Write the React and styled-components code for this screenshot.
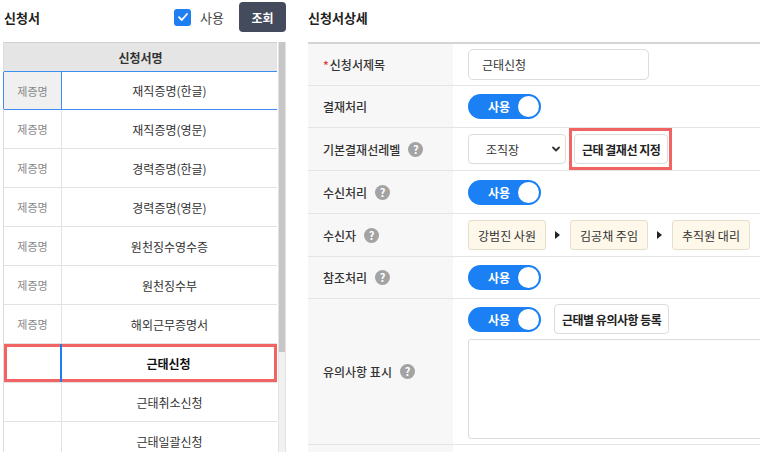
import styled, { createGlobalStyle } from 'styled-components';

const GlobalStyle = createGlobalStyle`
  html, body {
    margin: 0;
    padding: 0;
    background: #ffffff;
  }
  body {
    font-family: 'Noto Sans CJK KR', 'Noto Sans', sans-serif;
    color: #333333;
  }
`;

const Page = styled.div`
  display: flex;
  width: 760px;
  height: 452px;
  overflow: hidden;
`;

const LeftPanel = styled.section`
  width: 283px;
  margin-left: 3px;
  display: flex;
  flex-direction: column;
  flex-shrink: 0;
  overflow: hidden;
`;

const RightPanel = styled.section`
  flex: 1;
  min-width: 0;
  margin-left: 22px;
  display: flex;
  flex-direction: column;
  overflow: hidden;
`;

const PanelHeader = styled.div`
  height: 34px;
  flex-shrink: 0;
  margin-bottom: 8px;
  display: flex;
  align-items: center;
  padding-left: ${(p) => p.$indent || 0}px;
`;

const Title = styled.h2`
  margin: 0;
  font-size: 13px;
  font-weight: 700;
  color: #222222;
  flex: 1;
`;

const CheckLabel = styled.label`
  display: flex;
  align-items: center;
  gap: 9px;
  font-size: 13px;
  color: #444444;
  margin-right: 15px;
`;

const CheckBox = styled.span`
  width: 17px;
  height: 17px;
  border-radius: 3px;
  background: #1f7ff2;
  display: inline-flex;
  align-items: center;
  justify-content: center;
`;

const SearchButton = styled.button`
  width: 47px;
  height: 30px;
  border: none;
  border-radius: 4px;
  background: #434b5c;
  color: #ffffff;
  font-family: inherit;
  font-size: 12px;
  font-weight: 700;
  padding: 0;
`;

const ListBody = styled.div`
  display: grid;
  grid-template-columns: 1fr 8px;
  gap: 1px;
  flex: 1;
  min-height: 0;
  overflow: hidden;
`;

const ListTable = styled.div`
  border-left: 1px solid #dddddd;
  border-top: 1px solid #d0d0d0;
  display: flex;
  flex-direction: column;
`;

const ListHead = styled.div`
  height: 28px;
  flex-shrink: 0;
  background: #e5e5e5;
  display: flex;
  align-items: center;
  justify-content: center;
  font-size: 12px;
  font-weight: 700;
  color: #333333;
`;

const ListRow = styled.div`
  height: 39px;
  flex-shrink: 0;
  box-sizing: border-box;
  display: grid;
  grid-template-columns: 58px 1fr;
  border-bottom: 1px solid ${(p) => (p.$focus ? '#3d8ef2' : '#e2e2e2')};
  border-top: ${(p) => (p.$focus ? '1px solid #3d8ef2' : 'none')};
  box-shadow: ${(p) => (p.$selected ? 'inset 0 0 0 3px #f26464' : 'none')};
`;

const TypeCell = styled.div`
  display: flex;
  align-items: center;
  justify-content: center;
  font-size: 11px;
  color: #888888;
  border-right: 1px solid ${(p) => (p.$focus ? '#3d8ef2' : '#e2e2e2')};
  border-left: ${(p) => (p.$focus ? '1px solid #3d8ef2' : 'none')};
  margin-left: ${(p) => (p.$focus ? '-1px' : '0')};
  background: ${(p) => (p.$focus ? '#f0f0f0' : 'transparent')};
`;

const NameCell = styled.div`
  display: flex;
  align-items: center;
  justify-content: center;
  font-size: 12px;
  color: ${(p) => (p.$selected ? '#111111' : '#333333')};
  font-weight: ${(p) => (p.$selected ? 700 : 400)};
  box-shadow: ${(p) => (p.$selected ? 'inset 2px 0 0 #1e7ef0' : 'none')};
  margin-left: ${(p) => (p.$selected ? '-2px' : '0')};
`;

const ScrollTrack = styled.div`
  background: #f1f1f1;
  border-left: 1px solid #e2e2e2;
  border-right: 1px solid #e2e2e2;
  display: flex;
  flex-direction: column;
`;

const ScrollThumb = styled.div`
  height: 310px;
  background: #c6c6c6;
`;

const Form = styled.div`
  border-top: 2px solid #d4d4d4;
  display: flex;
  flex-direction: column;
`;

const FormRow = styled.div`
  height: ${(p) => p.$h}px;
  flex-shrink: 0;
  box-sizing: border-box;
  display: grid;
  grid-template-columns: 145px 1fr;
  border-bottom: 1px solid #e4e4e4;
`;

const Label = styled.div`
  background: #f7f7f7;
  padding-left: 15px;
  display: flex;
  align-items: center;
  gap: 8px;
  font-size: 12px;
  font-weight: 500;
  color: #333333;
`;

const Required = styled.span`
  color: #e23b3b;
  margin-right: 1px;
`;

const Help = styled.span`
  width: 15px;
  height: 15px;
  border-radius: 50%;
  background: #a3a3a3;
  color: #ffffff;
  font-size: 11px;
  font-weight: 700;
  display: inline-flex;
  align-items: center;
  justify-content: center;
  line-height: 1;
`;

const Value = styled.div`
  padding-left: 15px;
  display: flex;
  flex-direction: ${(p) => (p.$column ? 'column' : 'row')};
  align-items: ${(p) => (p.$column ? 'flex-start' : 'center')};
  justify-content: ${(p) => (p.$column ? 'center' : 'flex-start')};
  min-width: 0;
`;

const TextInput = styled.div`
  width: 181px;
  height: 31px;
  box-sizing: border-box;
  border: 1px solid #dcdcdc;
  border-radius: 5px;
  padding-left: 13px;
  display: flex;
  align-items: center;
  font-size: 12px;
  color: #333333;
`;

const Toggle = styled.span`
  width: 73px;
  height: 25px;
  box-sizing: border-box;
  border-radius: 13px;
  background: #1b80f4;
  display: inline-flex;
  align-items: center;
  padding: 0 2px 0 20px;
  color: #ffffff;
  font-size: 12px;
  font-weight: 700;
  flex-shrink: 0;
`;

const Knob = styled.span`
  width: 21px;
  height: 21px;
  border-radius: 50%;
  background: #ffffff;
  margin-left: auto;
`;

const SelectBox = styled.div`
  width: 98px;
  height: 30px;
  box-sizing: border-box;
  border: 1px solid #dcdcdc;
  border-radius: 4px;
  display: flex;
  align-items: center;
  padding: 0 4px 0 17px;
  font-size: 12px;
  color: #333333;
  justify-content: space-between;
`;

const Highlight = styled.span`
  display: inline-flex;
  align-items: center;
  border: 3px solid #f26464;
  padding: 3px 1px 3px 2px;
  margin-left: 3px;
`;

const OutlineButton = styled.button`
  height: 30px;
  box-sizing: border-box;
  border: 1px solid #dcdcdc;
  border-radius: 4px;
  background: #ffffff;
  padding: 0 7px;
  font-family: inherit;
  font-size: 12px;
  font-weight: 700;
  letter-spacing: -0.5px;
  color: #222222;
`;

const Chip = styled.span`
  width: 78px;
  height: 30px;
  box-sizing: border-box;
  border: 1px solid #e5dfcc;
  border-radius: 3px;
  background: #fdf8e9;
  display: inline-flex;
  align-items: center;
  justify-content: center;
  font-size: 12px;
  color: #333333;
  flex-shrink: 0;
`;

const Arrow = styled.span`
  width: 0;
  height: 0;
  border-top: 4px solid transparent;
  border-bottom: 4px solid transparent;
  border-left: 5px solid #222222;
  margin: 0 10px 0 9px;
  flex-shrink: 0;
`;

const ControlLine = styled.div`
  display: flex;
  align-items: center;
  gap: 13px;
`;

const TextArea = styled.div`
  width: 320px;
  height: 100px;
  box-sizing: border-box;
  border: 1px solid #dcdcdc;
  border-radius: 3px;
  margin-top: 5px;
  flex-shrink: 0;
`;

const forms = [
  { type: '제증명', name: '재직증명(한글)', focus: true },
  { type: '제증명', name: '재직증명(영문)' },
  { type: '제증명', name: '경력증명(한글)' },
  { type: '제증명', name: '경력증명(영문)' },
  { type: '제증명', name: '원천징수영수증' },
  { type: '제증명', name: '원천징수부' },
  { type: '제증명', name: '해외근무증명서' },
  { type: '', name: '근태신청', selected: true },
  { type: '', name: '근태취소신청' },
  { type: '', name: '근태일괄신청' },
];

const receivers = ['강범진 사원', '김공채 주임', '추직원 대리'];

const Check = () => (
  <svg width="12" height="12" viewBox="0 0 12 12">
    <polyline points="2,6.2 4.8,9 10,3" fill="none" stroke="#fff" strokeWidth="1.8" strokeLinecap="round" strokeLinejoin="round" />
  </svg>
);

const Chevron = () => (
  <svg width="10" height="10" viewBox="0 0 10 10">
    <polyline points="2,3.5 5,6.5 8,3.5" fill="none" stroke="#333" strokeWidth="1.8" strokeLinecap="round" strokeLinejoin="round" />
  </svg>
);

const Switch = () => (
  <Toggle>
    사용
    <Knob />
  </Toggle>
);

export default function App() {
  return (
    <>
      <GlobalStyle />
      <Page>
        <LeftPanel>
          <PanelHeader $indent={1}>
            <Title>신청서</Title>
            <CheckLabel>
              <CheckBox>
                <Check />
              </CheckBox>
              사용
            </CheckLabel>
            <SearchButton>조회</SearchButton>
          </PanelHeader>
          <ListBody>
            <ListTable>
              <ListHead>신청서명</ListHead>
              {forms.map((f) => (
                <ListRow key={f.name} $focus={f.focus} $selected={f.selected}>
                  <TypeCell $focus={f.focus}>{f.type}</TypeCell>
                  <NameCell $selected={f.selected}>{f.name}</NameCell>
                </ListRow>
              ))}
            </ListTable>
            <ScrollTrack>
              <ScrollThumb />
            </ScrollTrack>
          </ListBody>
        </LeftPanel>

        <RightPanel>
          <PanelHeader>
            <Title>신청서상세</Title>
          </PanelHeader>
          <Form>
            <FormRow $h={42}>
              <Label>
                <span>
                  <Required>*</Required>신청서제목
                </span>
              </Label>
              <Value>
                <TextInput>근태신청</TextInput>
              </Value>
            </FormRow>
            <FormRow $h={42}>
              <Label>결재처리</Label>
              <Value>
                <Switch />
              </Value>
            </FormRow>
            <FormRow $h={43}>
              <Label>
                기본결재선레벨 <Help>?</Help>
              </Label>
              <Value>
                <SelectBox>
                  조직장
                  <Chevron />
                </SelectBox>
                <Highlight>
                  <OutlineButton>근태 결재선 지정</OutlineButton>
                </Highlight>
              </Value>
            </FormRow>
            <FormRow $h={43}>
              <Label>
                수신처리 <Help>?</Help>
              </Label>
              <Value>
                <Switch />
              </Value>
            </FormRow>
            <FormRow $h={43}>
              <Label>
                수신자 <Help>?</Help>
              </Label>
              <Value>
                {receivers.map((r, i) => (
                  <span key={r} style={{ display: 'contents' }}>
                    {i > 0 && <Arrow />}
                    <Chip>{r}</Chip>
                  </span>
                ))}
              </Value>
            </FormRow>
            <FormRow $h={42}>
              <Label>
                참조처리 <Help>?</Help>
              </Label>
              <Value>
                <Switch />
              </Value>
            </FormRow>
            <FormRow $h={146}>
              <Label>
                유의사항 표시 <Help>?</Help>
              </Label>
              <Value $column>
                <ControlLine>
                  <Switch />
                  <OutlineButton>근태별 유의사항 등록</OutlineButton>
                </ControlLine>
                <TextArea />
              </Value>
            </FormRow>
            <FormRow $h={43}>
              <Label />
              <Value />
            </FormRow>
          </Form>
        </RightPanel>
      </Page>
    </>
  );
}
